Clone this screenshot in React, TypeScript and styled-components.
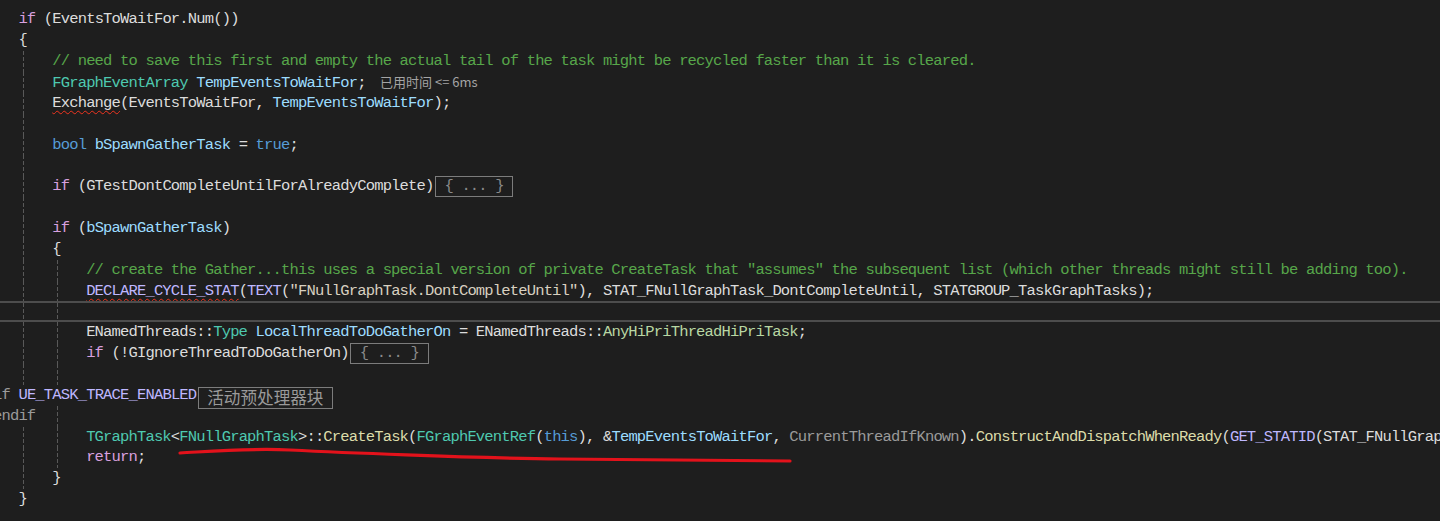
import React from "react";
import styled, { createGlobalStyle, css } from "styled-components";

const CH = 8.47;
const LH = 20.87;
const SCROLL = 15.5;
const FS = 15.5;
const LS = CH - FS * 0.6;

const C = {
  text: "#dcdcdc",
  ctrl: "#d8a0df",
  kw: "#569cd6",
  type: "#4ec9b0",
  local: "#9cdcfe",
  func: "#dcdcaa",
  macro: "#beb7ff",
  str: "#d8d0c0",
  comment: "#57a64a",
  enumv: "#b8d7a3",
  param: "#9a9a9a",
  pre: "#9b9b9b",
};

type Tok = [string, keyof typeof C, boolean?];

type LineDef = {
  indent: number;
  toks: Tok[];
  guides: number[];
  current?: boolean;
  collapsed?: string;
  cjkBox?: string;
  hint?: string;
};

const GlobalStyle = createGlobalStyle`
  html, body { margin: 0; padding: 0; background: #1e1e1e; }
  #root { width: 1440px; height: 521px; }
`;

const Editor = styled.div`
  position: relative;
  width: 1440px;
  height: 521px;
  overflow: hidden;
  background: #1e1e1e;
`;

const Lines = styled.div`
  display: flex;
  flex-direction: column;
  padding-top: 9.4px;
  font-family: "Liberation Mono", "Noto Sans CJK SC", monospace;
  font-size: ${FS}px;
  letter-spacing: ${LS}px;
  color: ${C.text};
`;

const guideX = (level: number) => level * 4 * CH + 4.3 - SCROLL;

const Line = styled.div<{ $indent: number; $guides: number[]; $current?: boolean }>`
  box-sizing: border-box;
  height: ${LH}px;
  line-height: ${LH}px;
  white-space: pre;
  text-indent: ${(p) => p.$indent * CH - SCROLL}px;
  background-repeat: no-repeat;
  background-size: 1px 100%;
  background-image: ${(p) =>
    p.$guides.length
      ? p.$guides
          .map(() => "repeating-linear-gradient(to bottom, #595959 0 4px, transparent 4px 6px)")
          .join(", ")
      : "none"};
  background-position: ${(p) => p.$guides.map((g) => `${guideX(g)}px 0`).join(", ") || "0 0"};
  ${(p) =>
    p.$current &&
    css`
      border-top: 2px solid #4d4d4d;
      border-bottom: 2px solid #4d4d4d;
    `}
`;

const Token = styled.span<{ $c: string; $squiggle?: boolean }>`
  color: ${(p) => p.$c};
  ${(p) =>
    p.$squiggle &&
    css`
      text-decoration: underline wavy #f0341f;
      text-decoration-thickness: 1px;
      text-underline-offset: 3px;
    `}
`;

const Collapsed = styled.span`
  display: inline-block;
  box-sizing: border-box;
  height: ${LH}px;
  line-height: ${LH - 2}px;
  vertical-align: top;
  text-indent: 0;
  margin-left: 1.5px;
  padding: 0 ${CH}px;
  border: 1px solid #7c7c7c;
  color: #8a8a8a;
`;

const CjkBox = styled(Collapsed)`
  font-family: "Noto Sans CJK SC", sans-serif;
  font-size: 16.6px;
  letter-spacing: 0;
  color: #9a9a9a;
  margin-top: 2px;
  height: ${LH + 1}px;
`;

const Hint = styled.span`
  font-family: "Noto Sans CJK SC", "Noto Sans", sans-serif;
  font-size: 13px;
  letter-spacing: 0;
  color: #a4a4a4;
  margin-left: 14.3px;
`;

const Annotation = styled.svg`
  position: absolute;
  left: 0;
  top: 0;
  width: 1440px;
  height: 521px;
  pointer-events: none;
`;

const LINES: LineDef[] = [
  { indent: 4, toks: [["if", "ctrl"], [" (EventsToWaitFor.Num())", "text"]], guides: [] },
  { indent: 4, toks: [["{", "text"]], guides: [] },
  {
    indent: 8,
    toks: [
      [
        "// need to save this first and empty the actual tail of the task might be recycled faster than it is cleared.",
        "comment",
      ],
    ],
    guides: [1],
  },
  {
    indent: 8,
    toks: [["FGraphEventArray", "type"], [" ", "text"], ["TempEventsToWaitFor", "local"], [";", "text"]],
    guides: [1],
    hint: "已用时间 <= 6ms",
  },
  {
    indent: 8,
    toks: [
      ["Exchange", "text", true],
      ["(EventsToWaitFor, ", "text"],
      ["TempEventsToWaitFor", "local"],
      [");", "text"],
    ],
    guides: [1],
  },
  { indent: 0, toks: [], guides: [1] },
  {
    indent: 8,
    toks: [["bool", "kw"], [" ", "text"], ["bSpawnGatherTask", "local"], [" = ", "text"], ["true", "kw"], [";", "text"]],
    guides: [1],
  },
  { indent: 0, toks: [], guides: [1] },
  {
    indent: 8,
    toks: [["if", "ctrl"], [" (GTestDontCompleteUntilForAlreadyComplete)", "text"]],
    guides: [1],
    collapsed: "{ ... }",
  },
  { indent: 0, toks: [], guides: [1] },
  { indent: 8, toks: [["if", "ctrl"], [" (", "text"], ["bSpawnGatherTask", "local"], [")", "text"]], guides: [1] },
  { indent: 8, toks: [["{", "text"]], guides: [1] },
  {
    indent: 12,
    toks: [
      [
        '// create the Gather...this uses a special version of private CreateTask that "assumes" the subsequent list (which other threads might still be adding too).',
        "comment",
      ],
    ],
    guides: [1, 2],
  },
  {
    indent: 12,
    toks: [
      ["DECLARE_CYCLE_STAT", "macro", true],
      ["(", "text"],
      ["TEXT", "macro"],
      ["(", "text"],
      ['"FNullGraphTask.DontCompleteUntil"', "str"],
      ["), STAT_FNullGraphTask_DontCompleteUntil, STATGROUP_TaskGraphTasks);", "text"],
    ],
    guides: [1, 2],
  },
  { indent: 0, toks: [], guides: [1, 2], current: true },
  {
    indent: 12,
    toks: [
      ["ENamedThreads::", "text"],
      ["Type", "type"],
      [" ", "text"],
      ["LocalThreadToDoGatherOn", "local"],
      [" = ENamedThreads::", "text"],
      ["AnyHiPriThreadHiPriTask", "enumv"],
      [";", "text"],
    ],
    guides: [1, 2],
  },
  {
    indent: 12,
    toks: [["if", "ctrl"], [" (!GIgnoreThreadToDoGatherOn)", "text"]],
    guides: [1, 2],
    collapsed: "{ ... }",
  },
  { indent: 0, toks: [], guides: [1, 2] },
  {
    indent: 0,
    toks: [["#if", "pre"], [" ", "text"], ["UE_TASK_TRACE_ENABLED", "macro"]],
    guides: [],
    cjkBox: "活动预处理器块",
  },
  { indent: 0, toks: [["#endif", "pre"]], guides: [2] },
  {
    indent: 12,
    toks: [
      ["TGraphTask", "type"],
      ["<", "text"],
      ["FNullGraphTask", "type"],
      [">::", "text"],
      ["CreateTask", "func"],
      ["(", "text"],
      ["FGraphEventRef", "type"],
      ["(", "text"],
      ["this", "kw"],
      ["), &", "text"],
      ["TempEventsToWaitFor", "local"],
      [", ", "text"],
      ["CurrentThreadIfKnown", "param"],
      [").", "text"],
      ["ConstructAndDispatchWhenReady", "func"],
      ["(", "text"],
      ["GET_STATID", "macro"],
      ["(STAT_FNullGraphTask_DontCompleteUntil));", "text"],
    ],
    guides: [1, 2],
  },
  { indent: 12, toks: [["return", "ctrl"], [";", "text"]], guides: [1, 2] },
  { indent: 8, toks: [["}", "text"]], guides: [1] },
  { indent: 4, toks: [["}", "text"]], guides: [] },
];

export default function App() {
  return (
    <>
      <GlobalStyle />
      <Editor>
        <Lines>
          {LINES.map((l, i) => (
            <Line key={i} $indent={l.indent} $guides={l.guides} $current={l.current}>
              {l.toks.map(([t, c, sq], j) => (
                <Token key={j} $c={C[c]} $squiggle={sq}>
                  {t}
                </Token>
              ))}
              {l.collapsed && <Collapsed>{l.collapsed}</Collapsed>}
              {l.cjkBox && <CjkBox>{l.cjkBox}</CjkBox>}
              {l.hint && <Hint>{l.hint}</Hint>}
            </Line>
          ))}
        </Lines>
        <Annotation viewBox="0 0 1440 521">
          <path
            d="M180 453 C 215 451, 250 448, 290 450 S 470 458, 560 459 S 740 461, 790 461"
            fill="none"
            stroke="#e3121b"
            strokeWidth={3.2}
            strokeLinecap="round"
          />
        </Annotation>
      </Editor>
    </>
  );
}
